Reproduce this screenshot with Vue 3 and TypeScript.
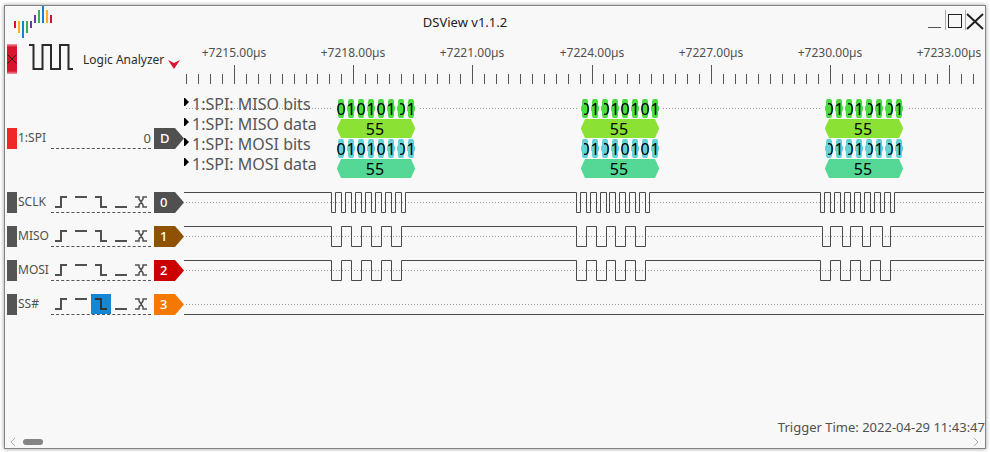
<script setup lang="ts">
import { ref } from 'vue'

interface Channel {
  name: string
  index: number
  color: string
  start: number
  edges: number[]
  trigger: number
}

interface Burst {
  x: number
  clipped: number[]
}

const ORIGIN = 184
const HIGH = 7.5
const LOW = 27.5

const sclk = [
  331, 335, 341, 345, 351, 355, 361, 365, 371, 375, 381, 385, 391, 395, 401, 405,
  576, 580, 586, 590, 596, 600, 606, 609, 615, 619, 625, 629, 635, 639, 645, 649,
  820, 824, 830, 834, 840, 844, 850, 854, 860, 864, 870, 874, 880, 884, 890, 894,
]
const dataHead = [331, 341, 351, 361, 371, 381, 391, 401, 576, 586, 596, 606, 615, 625, 635, 645]
const miso = [...dataHead, 822, 830, 842, 850, 862, 870, 882, 890]
const mosi = [...dataHead, 820, 830, 840, 850, 860, 870, 880, 890]

const channels = ref<Channel[]>([
  { name: 'SCLK', index: 0, color: '#505050', start: HIGH, edges: sclk, trigger: -1 },
  { name: 'MISO', index: 1, color: '#8f5202', start: HIGH, edges: miso, trigger: -1 },
  { name: 'MOSI', index: 2, color: '#cc0000', start: HIGH, edges: mosi, trigger: -1 },
  { name: 'SS#', index: 3, color: '#f57900', start: LOW, edges: [], trigger: 2 },
])

const triggers = [
  { label: 'Rising edge', d: 'M4 15H10V5H16' },
  { label: 'High level', d: 'M4 5H16' },
  { label: 'Falling edge', d: 'M4 5H10V15H16' },
  { label: 'Low level', d: 'M4 15H16' },
  { label: 'Either edge', d: 'M4 5H8V7L12 13V15H16M4 15H8V13L12 7V5H16' },
]

function wave(channel: Channel): string {
  let level = channel.start
  let d = `M0 ${level}`
  for (const edge of channel.edges) {
    level = level === HIGH ? LOW : HIGH
    d += `H${edge - ORIGIN + 0.5}V${level}`
  }
  return d + 'H6000'
}

const majors = Array.from({ length: 7 }, (_, i) => ({
  x: Math.round(50 + (i * 715) / 6),
  label: `+${7215 + i * 3}.00µs`,
}))
const minors = Array.from({ length: 67 }, (_, i) => i - 4)
  .filter((i) => i % 10 !== 0)
  .map((i) => Math.round(50 + (i * 71.5) / 6))

const decodeRows = [
  { label: '1:SPI: MISO bits', color: '#4cdb41', bits: true },
  { label: '1:SPI: MISO data', color: '#8be234', bits: false },
  { label: '1:SPI: MOSI bits', color: '#63d2d6', bits: true },
  { label: '1:SPI: MOSI data', color: '#55d896', bits: false },
]
const bursts: Burst[] = [
  { x: 153, clipped: [6] },
  { x: 397, clipped: [0, 2] },
  { x: 641, clipped: [0, 2, 4, 6] },
]
const bits = ['0', '1', '0', '1', '0', '1', '0', '1']
const scroll = ref(0)

function toggle(channel: Channel, i: number): void {
  channel.trigger = channel.trigger === i ? -1 : i
}
</script>

<template>
  <div class="desktop">
    <main class="window">
      <header class="titlebar">
        <svg class="logo" width="40" height="34" aria-hidden="true">
          <g fill="#d8152c"><rect x="0" y="15" width="2" height="7" /><rect x="36" y="9" width="2" height="8" /></g>
          <g fill="#f5b418"><rect x="4" y="15" width="2" height="12" /><rect x="32" y="4" width="2" height="13" /></g>
          <g fill="#1481d4"><rect x="8" y="15" width="2" height="17" /><rect x="28" y="0" width="2" height="17" /></g>
          <g fill="#3bb058"><rect x="12" y="15" width="2" height="12" /><rect x="24" y="4" width="2" height="13" /></g>
          <g fill="#6d389c"><rect x="16" y="15" width="2" height="7" /><rect x="20" y="9" width="2" height="8" /></g>
        </svg>
        <h1>DSView v1.1.2</h1>
        <div class="controls">
          <button type="button" aria-label="Minimize">
            <svg width="18" height="20"><path d="M3 17.5H16" stroke="#555" /></svg>
          </button>
          <button type="button" aria-label="Maximize">
            <svg width="18" height="20"><rect x="2.5" y="4.5" width="13" height="13" fill="none" stroke="#222" /></svg>
          </button>
          <button type="button" aria-label="Close">
            <svg width="18" height="20"><path d="M1 4L17 19M17 4L1 19" stroke="#222" stroke-width="2" /></svg>
          </button>
        </div>
      </header>

      <section class="row head">
        <div class="device">
          <button type="button" class="stop" aria-label="Close device">
            <svg width="10" height="30"><path d="M.5 10.500L9.500 19.500M9.500 10.500L.5 19.500" stroke="#3c1014" /></svg>
          </button>
          <svg class="pulse" width="46" height="28" aria-hidden="true">
            <path d="M0 1H4.500V25H13.500V1H22V25H31V1H39.500V25H44" fill="none" stroke="#2b2b2b" stroke-width="2" />
          </svg>
          <button type="button" class="mode">
            <span>Logic Analyzer</span>
            <svg width="12" height="10" aria-hidden="true"><path d="M0 0L6 3L12 0L6 9Z" fill="#d8152c" /></svg>
          </button>
        </div>
        <svg class="plot" height="51">
          <g class="ruler-text">
            <text v-for="m in majors" :key="m.x" :x="m.x" y="17">{{ m.label }}</text>
          </g>
          <g stroke="#555">
            <line v-for="m in majors" :key="m.x" :x1="m.x + 0.5" :x2="m.x + 0.5" y1="25" y2="44" />
            <line v-for="m in minors" :key="m" :x1="m + 0.5" :x2="m + 0.5" y1="34" y2="44" />
          </g>
        </svg>
      </section>

      <section class="row decoder">
        <div class="channel">
          <span class="tag active"></span>
          <span class="name">1:SPI</span>
          <span class="value">0</span>
          <span class="badge">D</span>
        </div>
        <svg class="plot" height="94">
          <defs>
            <clipPath id="half"><rect x="3" y="0" width="8" height="20" /></clipPath>
          </defs>
          <line class="dots" x1="2" x2="100%" y1="17.5" y2="17.5" />
          <g v-for="(row, r) in decodeRows" :key="row.label" :transform="`translate(0 ${8 + r * 20})`">
            <path d="M0 -1H1L5 3L1 7H0Z" fill="#000" />
            <text class="row-label" x="8" y="11">{{ row.label }}</text>
            <g v-for="b in bursts" :key="b.x" :transform="`translate(${b.x} 0)`">
              <template v-if="row.bits">
                <rect v-if="r === 0" x="-4" y="8" width="86" height="3" fill="#f8f8f8" />
                <g v-for="(bit, i) in bits" :key="i" :transform="`translate(${i * 10} 0)`">
                  <path d="M2 0H6L7 2V6L8 8V11L7 13V17L6 19H2L1 17V13L0 11V8L1 6V2Z" :fill="row.color" />
                  <text class="code" x="4" y="16" :clip-path="b.clipped.includes(i) ? 'url(#half)' : undefined">{{ bit }}</text>
                </g>
              </template>
              <template v-else>
                <path d="M4 0H74L78 9V10L74 19H4L0 10V9Z" :fill="row.color" />
                <text class="code" x="38" y="16">55</text>
              </template>
            </g>
          </g>
        </svg>
      </section>

      <section v-for="c in channels" :key="c.name" class="row">
        <div class="channel">
          <span class="tag"></span>
          <span class="name">{{ c.name }}</span>
          <div class="triggers">
            <button
              v-for="(t, i) in triggers"
              :key="t.label"
              type="button"
              :class="{ on: c.trigger === i }"
              :aria-label="`${c.name} ${t.label}`"
              :aria-pressed="c.trigger === i"
              @click="toggle(c, i)"
            >
              <svg width="20" height="20">
                <path :d="t.d" fill="none" :stroke-width="t.label === 'Either edge' ? 1.5 : 2" />
              </svg>
            </button>
          </div>
          <span class="badge" :style="{ background: c.color }">{{ c.index }}</span>
        </div>
        <svg class="plot" height="34">
          <line class="dots" x1="2" x2="100%" y1="17.5" y2="17.5" />
          <path class="wave" :d="wave(c)" />
        </svg>
      </section>

      <footer>
        <p>Trigger Time: 2022-04-29 11:43:47</p>
        <div class="scrollbar">
          <button type="button" aria-label="Scroll left" @click="scroll = Math.max(0, scroll - 1)">
            <svg width="6" height="10"><path d="M5 1L1 5L5 9" fill="none" stroke="#aaa" /></svg>
          </button>
          <input v-model.number="scroll" type="range" min="0" max="100" aria-label="Time position" />
          <button type="button" aria-label="Scroll right" @click="scroll = Math.min(100, scroll + 1)">
            <svg width="6" height="10"><path d="M1 1L5 5L1 9" fill="none" stroke="#aaa" /></svg>
          </button>
        </div>
      </footer>
    </main>
  </div>
</template>

<style>
body {
  margin: 0;
  background: #fff;
}
</style>

<style scoped>
.desktop {
  box-sizing: border-box;
  display: flex;
  min-height: 100vh;
  padding: 5px 4px 3px;
  font-family: 'Noto Sans', 'Open Sans', sans-serif;
  font-size: 13px;
  color: #505050;
}
.window {
  box-sizing: border-box;
  display: flex;
  flex: 1;
  flex-direction: column;
  min-width: 0;
  border: 1px solid #848484;
  background: #f8f8f8;
  box-shadow: 0 0 4px #999;
}
button {
  display: flex;
  padding: 0;
  border: 0;
  background: none;
  font: inherit;
  color: inherit;
}
svg {
  display: block;
}
.titlebar {
  display: grid;
  grid-template-columns: 1fr 60px;
  height: 34px;
}
.logo,
h1 {
  grid-row: 1;
  grid-column: 1;
}
.logo {
  margin-left: 9px;
}
h1 {
  margin: 0;
  font-size: 13px;
  font-weight: 400;
  line-height: 32px;
  text-align: center;
  color: #222;
}
.controls {
  display: flex;
  padding-top: 4px;
}
.controls button {
  width: 20px;
  height: 20px;
}
.controls button + button {
  border-left: 1px solid #aaa;
}
.row {
  display: grid;
  grid-template-columns: 179px 1fr;
  padding-right: 1px;
}
.plot {
  width: 100%;
  overflow: hidden;
}
.device {
  display: flex;
  align-items: flex-start;
  padding: 4px 0 0 2px;
}
.stop {
  background: linear-gradient(#f0a0aa, #d8152c 3px, #d8152c 27px, #f0a0aa);
}
.pulse {
  margin-left: 12px;
}
.mode {
  align-items: center;
  gap: 4px;
  height: 30px;
  margin-left: 8px;
  font-size: 12px;
  color: #2b2b2b;
}
.mode span {
  white-space: nowrap;
}
.mode svg {
  margin-top: 12px;
}
.ruler-text {
  font-size: 12px;
  fill: #505050;
  text-anchor: middle;
}
.row-label {
  font-size: 16px;
  fill: #555;
}
.code {
  font-size: 16px;
  fill: #000;
  text-anchor: middle;
}
.dots {
  stroke: #999;
  stroke-dasharray: 1 2;
}
.wave {
  fill: none;
  stroke: #4a4a4a;
}
.channel {
  display: grid;
  grid-template-columns: 10px 31px 100px 30px;
  column-gap: 1px;
  align-self: center;
  height: 20px;
  padding-left: 2px;
  line-height: 20px;
}
.tag {
  background: #555;
}
.tag.active {
  background: #f02828;
}
.name {
  font-size: 12px;
  white-space: nowrap;
}
.value,
.triggers {
  height: 20px;
  margin-left: 1px;
  width: 100px;
  border-bottom: 1px dashed #555;
}
.value {
  text-align: right;
}
.triggers {
  display: flex;
}
.triggers button {
  stroke: #505050;
}
.triggers .on {
  background: #1487d4;
  stroke: #333;
}
.badge {
  width: 30px;
  margin-left: 3px;
  box-sizing: border-box;
  padding-left: 6px;
  background: #505050;
  color: #fff;
  font-weight: 500;
  clip-path: polygon(0 0, 70% 0, 100% 50%, 70% 100%, 0 100%);
}
footer {
  margin-top: auto;
}
footer p {
  margin: 0;
  line-height: 18px;
  text-align: right;
}
.scrollbar {
  display: flex;
  align-items: center;
  gap: 7px;
  height: 12px;
  padding: 0 6px 0 5px;
}
input {
  flex: 1;
  min-width: 0;
  height: 6px;
  margin: 0;
  appearance: none;
  background: none;
}
input::-webkit-slider-thumb {
  width: 20px;
  height: 6px;
  border-radius: 3px;
  appearance: none;
  background: #848484;
}
</style>
